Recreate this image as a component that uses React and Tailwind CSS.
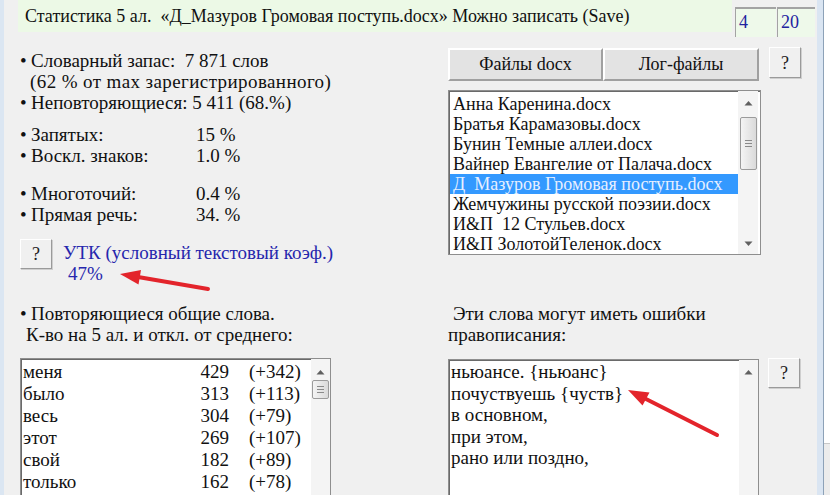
import React from "react";

const serif = { fontFamily: '"Liberation Serif", "Times New Roman", serif' };

const files = [
  "Анна Каренина.docx",
  "Братья Карамазовы.docx",
  "Бунин Темные аллеи.docx",
  "Вайнер Евангелие от Палача.docx",
  "Д  Мазуров Громовая поступь.docx",
  "Жемчужины русской поэзии.docx",
  "И&П  12 Стульев.docx",
  "И&П ЗолотойТеленок.docx",
];

const common = [
  ["меня", 429, "(+342)"],
  ["было", 313, "(+113)"],
  ["весь", 304, "(+79)"],
  ["этот", 269, "(+107)"],
  ["свой", 182, "(+89)"],
  ["только", 162, "(+78)"],
];

const spelling = [
  "ньюансе. {ньюанс}",
  "почуствуешь {чуств}",
  "в основном,",
  "при этом,",
  "рано или поздно,",
];

function Arrow({ up }) {
  return (
    <svg width="9" height="6" viewBox="0 0 9 6" className="mx-auto">
      {up ? <path d="M0.5 5.5 L4.5 1 L8.5 5.5 Z" fill="#606060" /> : <path d="M0.5 0.5 L4.5 5 L8.5 0.5 Z" fill="#606060" />}
    </svg>
  );
}

function Thumb({ h }) {
  return (
    <div
      className="mx-auto w-[17px] rounded-[2px] border border-[#9b9b9b] bg-gradient-to-r from-[#f4f4f4] to-[#dadada] flex flex-col items-center justify-center gap-[2px]"
      style={{ height: h }}
    >
      <div className="w-[7px] h-px bg-[#8a8a8a]" />
      <div className="w-[7px] h-px bg-[#8a8a8a]" />
      <div className="w-[7px] h-px bg-[#8a8a8a]" />
    </div>
  );
}

function HelpButton({ className = "" }) {
  return (
    <button
      className={`w-[32px] h-[30px] bg-[#f0f0f0] border border-t-[#ffffff] border-l-[#ffffff] border-r-[#9a9a9a] border-b-[#9a9a9a] shadow-[1px_1px_0_#cfcfcf] text-[18px] text-[#202020] leading-none ${className}`}
    >
      ?
    </button>
  );
}

function Bullet({ label, value }) {
  return (
    <div className="flex">
      <span className="w-[11px]">•</span>
      <span className="w-[165px]">{label}</span>
      <span>{value}</span>
    </div>
  );
}

export default function App() {
  return (
    <div className="relative w-[830px] h-[495px] overflow-hidden bg-[#f0f0f0] flex text-[#111] text-[19px]" style={serif}>
      <div className="w-[4px] bg-[#dbe6f2]" />

      <div className="w-[813px] flex flex-col">
        {/* title bar with counters */}
        <div className="h-[40px] flex items-start text-[18px]">
          <div className="ml-[14px] w-[714px] h-[32px] bg-[#ecf9e6] pl-[7px] pt-px flex items-center whitespace-pre">
            Статистика 5 ал.  «Д_Мазуров Громовая поступь.docx» Можно записать (Save)
          </div>
          <div className="ml-[3px] mt-[7px] w-[41px] h-[30px] bg-[#eef9ea] border-t-2 border-l border-[#a3a3a3] pl-[3px] text-[#2222a0] leading-[26px]">
            4
          </div>
          <div className="ml-[1px] mt-[7px] w-[38px] h-[30px] bg-[#eef9ea] border-t-2 border-l border-[#a3a3a3] pl-[3px] text-[#2222a0] leading-[26px]">
            20
          </div>
        </div>

        <div className="flex flex-1">
          {/* left column: statistics */}
          <div className="w-[444px] pl-[16px] pt-[13px] leading-[21px]">
            <div className="flex">
              <span className="w-[11px]">•</span>
              <span className="whitespace-pre">Словарный запас:  7 871 слов</span>
            </div>
            <div className="pl-[10px] tracking-[0.4px]">(62 % от max зарегистрированного)</div>
            <div className="flex">
              <span className="w-[11px]">•</span>
              <span>Неповторяющиеся: 5 411 (68.%)</span>
            </div>

            <div className="mt-[11px]">
              <Bullet label="Запятых:" value="15 %" />
              <Bullet label="Воскл. знаков:" value="1.0 %" />
            </div>
            <div className="mt-[17px]">
              <Bullet label="Многоточий:" value="0.4 %" />
              <Bullet label="Прямая речь:" value="34. %" />
            </div>

            <div className="mt-[14px] flex items-start">
              <HelpButton className="h-[29px] w-[31px]" />
              <div className="ml-[11px] mt-[3px] text-[#2626ad]">
                <div>УТК (условный текстовый коэф.)</div>
                <div className="pl-[5px]">47%</div>
              </div>
            </div>

            <div className="mt-[19px]">
              <div className="flex">
                <span className="w-[11px]">•</span>
                <span>Повторяющиеся общие слова.</span>
              </div>
              <div className="pl-[6px]">К-во на 5 ал. и откл. от среднего:</div>
            </div>

            <div className="mt-[13px] w-[311px] h-[150px] bg-white border border-[#8e8e8e] shadow-[inset_1px_1px_0_#6a6a6a] flex">
              <div className="flex-1 pl-[2px] pt-[2px] leading-[22px]">
                {common.map(([w, n, d]) => (
                  <div key={w} className="flex">
                    <span className="w-[150px]">{w}</span>
                    <span className="w-[56px] text-right">{n}</span>
                    <span className="ml-[20px]">{d}</span>
                  </div>
                ))}
              </div>
              <div className="w-[19px] bg-[#f4f4f4] pt-[10px]">
                <Arrow up />
                <div className="mt-[5px]">
                  <Thumb h={19} />
                </div>
              </div>
            </div>
          </div>

          {/* right column: file lists */}
          <div className="w-[369px] pt-[11px]">
            <div className="flex items-start text-[18px]">
              <button className="w-[155px] h-[33px] bg-[#e3e3e3] border-2 border-t-white border-l-white border-r-[#a0a0a0] border-b-[#a0a0a0]">
                Файлы docx
              </button>
              <button className="w-[156px] h-[33px] bg-[#e3e3e3] border-2 border-t-white border-l-white border-r-[#a0a0a0] border-b-[#a0a0a0]">
                Лог-файлы
              </button>
              <HelpButton className="ml-[10px] -mt-[1px] h-[31px]" />
            </div>

            <div className="mt-[9px] w-[313px] h-[165px] bg-white border border-[#8e8e8e] shadow-[inset_1px_1px_0_#6a6a6a] flex text-[18px] leading-[20px]">
              <div className="flex-1 pl-[1px] pt-[3px]">
                {files.map((f, i) => (
                  <div
                    key={f}
                    className={`whitespace-pre pl-[3px] ${i === 4 ? "bg-[#3399ff] text-[#e6efff]" : ""}`}
                  >
                    {f}
                  </div>
                ))}
              </div>
              <div className="w-[20px] mr-[2px] bg-[#f4f4f4] pt-[9px] flex flex-col">
                <Arrow up />
                <div className="mt-[11px]">
                  <Thumb h={53} />
                </div>
                <div className="mt-auto mb-[7px]">
                  <Arrow />
                </div>
              </div>
            </div>

            <div className="mt-[48px] leading-[21px]">
              <div className="pl-[5px]">Эти слова могут иметь ошибки</div>
              <div>правописания:</div>
            </div>

            <div className="mt-[14px] flex items-start">
              <div className="w-[311px] h-[150px] bg-white border border-[#8e8e8e] shadow-[inset_1px_1px_0_#6a6a6a] flex">
                <div className="flex-1 pl-[2px] pt-px leading-[21.6px]">
                  {spelling.map((s) => (
                    <div key={s}>{s}</div>
                  ))}
                </div>
                <div className="w-[19px] bg-[#f4f4f4] pt-[9px]">
                  <Arrow up />
                </div>
              </div>
              <HelpButton className="ml-[9px] -mt-[1px]" />
            </div>
          </div>
        </div>
      </div>

      {/* window border on the right */}
      <div className="w-[6px] bg-[#dae5f2]" />
      <div className="w-px bg-[#8da2b8]" />
      <div className="w-[6px] flex flex-col">
        <div className="flex-1 bg-white" />
        <div className="h-[52px] bg-[#ececec] border-t border-[#c8c8c8]" />
      </div>

      {/* red pointer arrows drawn over the form */}
      <svg className="absolute inset-0 pointer-events-none" width="830" height="495">
        <line x1="208" y1="289" x2="138" y2="277" stroke="#e3242b" strokeWidth="4" strokeLinecap="round" />
        <polygon points="120,274 141,270 138.5,284.5" fill="#e3242b" />
        <line x1="717" y1="435" x2="644" y2="398" stroke="#e3242b" strokeWidth="4" strokeLinecap="round" />
        <polygon points="628,390 649.5,392.5 642.5,405.5" fill="#e3242b" />
      </svg>
    </div>
  );
}
